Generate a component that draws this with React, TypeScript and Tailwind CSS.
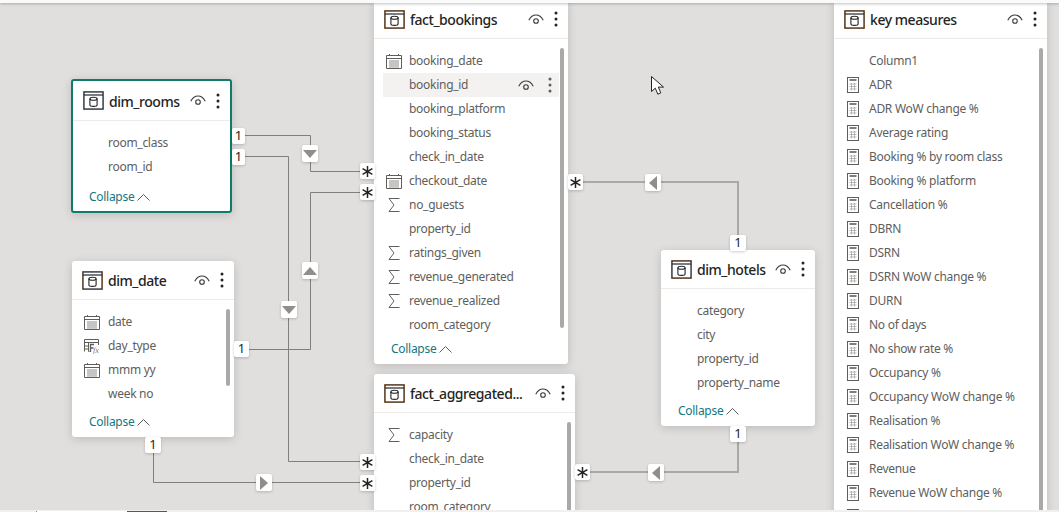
import React from "react";

type IconKind = "none" | "calendar" | "sigma" | "calc" | "fx";
type Field = { name: string; icon?: IconKind; active?: boolean };

function TableIcon() {
  return (
    <svg width="21" height="19" viewBox="0 0 21 19" fill="none" className="shrink-0">
      <rect x="0.5" y="0.5" width="20" height="18" stroke="#e8a05a" strokeWidth="1" />
      <rect x="1" y="1" width="19" height="17" stroke="#1f2733" strokeWidth="1.2" />
      <path d="M1 4h19" stroke="#1f2733" strokeWidth="1.2" />
      <ellipse cx="10.500" cy="7.800" rx="3.600" ry="1.500" stroke="#252423" strokeWidth="1.1" />
      <path d="M6.900 7.800v6.200c0 .9 1.600 1.400 3.600 1.400s3.600-.5 3.600-1.400V7.800" stroke="#252423" strokeWidth="1.1" />
    </svg>
  );
}

function Eye() {
  return (
    <svg width="16" height="11" viewBox="0 0 16 11" fill="none" className="shrink-0">
      <path d="M.8 6.200C2.600 2.800 5.200 1 8 1s5.400 1.800 7.200 5.200" stroke="#3b3a39" strokeWidth="1.1" />
      <circle cx="8" cy="7" r="2.300" stroke="#3b3a39" strokeWidth="1.1" />
    </svg>
  );
}

function Dots({ color = "#252423" }: { color?: string }) {
  return (
    <svg width="4" height="16" viewBox="0 0 4 16" className="shrink-0" fill={color}>
      <circle cx="2" cy="2" r="1.500" />
      <circle cx="2" cy="8" r="1.500" />
      <circle cx="2" cy="14" r="1.500" />
    </svg>
  );
}

function FieldIcon({ kind }: { kind: IconKind }) {
  if (kind === "calendar") {
    return (
      <svg width="16" height="16" viewBox="0 0 16 16" fill="none" stroke="#605e5c" strokeWidth="1">
        <path d="M.5 2.500h15v13H.5zM.5 5.500h15M3.500 1v2M12.500 1v2" />
        <path d="M3 8h10M3 10h10M3 12h10M3 14h10M4 7v7.500M6 7v7.500M8 7v7.500M10 7v7.500M12 7v7.500" stroke="#a6a4a2" strokeWidth=".8" />
      </svg>
    );
  }
  if (kind === "sigma") {
    return (
      <svg width="12" height="14" viewBox="0 0 12 14" fill="none" stroke="#605e5c" strokeWidth="1" className="ml-[2px]">
        <path d="M11.500.5H1l5 6.500-5 6.500h10.500" />
      </svg>
    );
  }
  if (kind === "calc") {
    return (
      <svg width="12" height="16" viewBox="0 0 12 16" fill="none" stroke="#605e5c" strokeWidth="1" className="ml-[1px]">
        <rect x=".5" y=".5" width="11" height="15" />
        <path d="M2.500 3h7" strokeWidth="1.600" />
        <path d="M2.500 7h7M2.500 9.500h7M2.500 12h7M4.500 6v7.500M7.500 6v7.500" stroke="#a6a4a2" strokeWidth=".8" />
      </svg>
    );
  }
  if (kind === "fx") {
    return (
      <svg width="16" height="16" viewBox="0 0 16 16" fill="none">
        <path d="M.5 13.500V1.500h14V7M.5 4.500h14M.5 8h4M.5 11h4M4.500 4.500v9h1" stroke="#605e5c" />
        <path d="M10 6.500H6.500v7.500M6.500 10h3" stroke="#605e5c" strokeWidth="1.300" />
        <text x="9" y="15" fontSize="8" fontStyle="italic" fontFamily="Liberation Serif, serif" fill="#7a7876">fx</text>
      </svg>
    );
  }
  return null;
}

function TableCard({
  title,
  fields,
  className,
  scroll,
  collapse,
  headerClass = "h-[39px]",
  iconCol = "w-[26px]",
}: {
  title: string;
  fields: Field[];
  className: string;
  scroll?: string;
  collapse?: string;
  headerClass?: string;
  iconCol?: string;
}) {
  return (
    <div className={`absolute bg-white rounded-[3px] shadow-[0_2px_10px_rgba(0,0,0,0.16)] ${className}`}>
      <div className={`flex items-center pl-[10px] pr-[10px] border-b border-[#ecebea] ${headerClass}`}>
        <TableIcon />
        <span className="ml-[5px] pt-px flex-1 whitespace-nowrap text-[14px] font-medium tracking-[-0.45px] text-[#252423]">{title}</span>
        <Eye />
        <span className="ml-[10px]"><Dots /></span>
      </div>
      <div className="pt-[10px] px-[9px]">
        {fields.map((f, i) => (
          <div key={f.name + i} className={`flex items-center h-6 ${f.active ? "bg-[#f3f2f1]" : ""}`}>
            <span className={`pl-[3px] shrink-0 flex items-center ${iconCol}`}>
              {f.icon ? <FieldIcon kind={f.icon} /> : null}
            </span>
            <span className="flex-1 whitespace-nowrap text-[12px] tracking-[-0.28px] text-[#605e5c]">{f.name}</span>
            {f.active ? (
              <span className="flex items-center gap-[14px] pr-[7px]">
                <Eye />
                <Dots color="#605e5c" />
              </span>
            ) : null}
          </div>
        ))}
      </div>
      {collapse ? (
        <div className={`flex items-center text-[12px] tracking-[-0.28px] text-[#13777f] ${collapse}`}>
          Collapse
          <svg width="13" height="7" viewBox="0 0 13 7" fill="none" stroke="#605e5c" className="ml-[3px]">
            <path d="M.5 6.500l6-6 6 6" />
          </svg>
        </div>
      ) : null}
      {scroll ? <div className={`absolute w-1 rounded-sm bg-[#a9a9a9] ${scroll}`} /> : null}
    </div>
  );
}

function Badge({ className, children }: { className: string; children: React.ReactNode }) {
  return (
    <div className={`absolute flex items-center justify-center bg-white rounded-[2px] shadow-[0_1px_3px_rgba(0,0,0,0.2)] ${className}`}>
      {children}
    </div>
  );
}

function One({ className }: { className: string }) {
  return <Badge className={`h-4 text-[13px] text-[#252423] ${className}`}>1</Badge>;
}

function Star({ className }: { className: string }) {
  return (
    <Badge className={`w-[15px] h-4 ${className}`}>
      <svg width="11" height="11" viewBox="0 0 11 11" stroke="#252423" strokeWidth="1.500">
        <path d="M5.500 0v11M.6 2.600l9.800 5.800M.6 8.400l9.800-5.800" />
      </svg>
    </Badge>
  );
}

function Arrow({ dir, className }: { dir: "down" | "up" | "left" | "right"; className: string }) {
  const d = {
    down: "M0 3h14L7 11z",
    up: "M0 11h14L7 3z",
    left: "M11 0v14L3 7z",
    right: "M3 0v14l8-7z",
  }[dir];
  return (
    <Badge className={`w-4 h-[17px] ${className}`}>
      <svg width="14" height="14" viewBox="0 0 14 14" fill="#8f8e8d">
        <path d={d} />
      </svg>
    </Badge>
  );
}

const rooms: Field[] = [{ name: "room_class" }, { name: "room_id" }];
const dates: Field[] = [
  { name: "date", icon: "calendar" },
  { name: "day_type", icon: "fx" },
  { name: "mmm yy", icon: "calendar" },
  { name: "week no" },
];
const bookings: Field[] = [
  { name: "booking_date", icon: "calendar" },
  { name: "booking_id", active: true },
  { name: "booking_platform" },
  { name: "booking_status" },
  { name: "check_in_date" },
  { name: "checkout_date", icon: "calendar" },
  { name: "no_guests", icon: "sigma" },
  { name: "property_id" },
  { name: "ratings_given", icon: "sigma" },
  { name: "revenue_generated", icon: "sigma" },
  { name: "revenue_realized", icon: "sigma" },
  { name: "room_category" },
];
const aggregated: Field[] = [
  { name: "capacity", icon: "sigma" },
  { name: "check_in_date" },
  { name: "property_id" },
  { name: "room_category" },
];
const hotels: Field[] = [
  { name: "category" },
  { name: "city" },
  { name: "property_id" },
  { name: "property_name" },
];
const measures: Field[] = [
  { name: "Column1" },
  ...[
    "ADR",
    "ADR WoW change %",
    "Average rating",
    "Booking % by room class",
    "Booking % platform",
    "Cancellation %",
    "DBRN",
    "DSRN",
    "DSRN WoW change %",
    "DURN",
    "No of days",
    "No show rate %",
    "Occupancy %",
    "Occupancy WoW change %",
    "Realisation %",
    "Realisation WoW change %",
    "Revenue",
    "Revenue WoW change %",
    "",
  ].map((name): Field => ({ name, icon: "calc" })),
];

export default function App() {
  return (
    <div className="flex flex-col w-[1059px] h-[512px] overflow-hidden bg-[#f0f0f0] font-['Noto_Sans',sans-serif]">
      <div className="relative z-10 h-[3px] shrink-0 bg-[#fafafa] shadow-[0_1px_3px_rgba(0,0,0,0.25)]" />

      <div className="relative flex-1 overflow-hidden bg-[#e0dfdd]">
        {/* relationship lines */}
        <svg width="1059" height="507" viewBox="0 3 1059 507" fill="none" className="absolute inset-0">
          <g stroke="#7f7f7f" strokeWidth="1">
            <path d="M245 135.500H310.500V171.500H361" />
            <path d="M245 156.500H288.500V461.500H361" />
            <path d="M361 192.500H310.500V349.500H247" />
            <path d="M361 482.500H153.500V452" />
          </g>
          <g stroke="#a9a9a9" strokeWidth="2">
            <path d="M583 182H738V236" />
            <path d="M590 472H738V441" />
          </g>
        </svg>

        <TableCard
          title="dim_rooms"
          fields={rooms}
          className="left-[71px] top-[76px] w-[161px] h-[134px] border-2 border-[#0f7b68]"
          headerClass="h-[40px]"
          collapse="h-[36px] pl-4"
        />
        <TableCard
          title="dim_date"
          fields={dates}
          className="left-[72px] top-[258px] w-[162px] h-[176px]"
          scroll="right-[4px] top-[48px] h-[77px]"
          iconCol="w-[27px]"
          collapse="h-8 pl-[17px]"
        />
        <TableCard
          title="fact_bookings"
          fields={bookings}
          className="left-[374px] top-[-3px] w-[194px] h-[364px]"
          scroll="right-[4px] top-[48px] h-[280px]"
          collapse="h-6 pl-[17px]"
        />
        <TableCard
          title="fact_aggregated..."
          fields={aggregated}
          className="left-[374px] top-[371px] w-[201px] h-[170px]"
          scroll="right-[4px] top-[48px] h-[110px]"
        />
        <TableCard
          title="dim_hotels"
          fields={hotels}
          className="left-[661px] top-[247px] w-[154px] h-[176px]"
          iconCol="w-[27px]"
          collapse="h-8 pl-[17px]"
        />
        <TableCard
          title="key measures"
          fields={measures}
          className="left-[834px] top-[-3px] w-[213px] h-[540px]"
          scroll="right-[4px] top-[48px] h-[480px]"
        />

        <One className="left-[232px] top-[125px] w-[13px]" />
        <One className="left-[232px] top-[146px] w-[13px]" />
        <One className="left-[234px] top-[338px] w-[15px]" />
        <One className="left-[145px] top-[434px] w-4" />
        <One className="left-[730px] top-[232px] w-4" />
        <One className="left-[730px] top-[423px] w-4" />

        <Star className="left-[360px] top-[160px]" />
        <Star className="left-[360px] top-[181px]" />
        <Star className="left-[360px] top-[451px]" />
        <Star className="left-[360px] top-[472px]" />
        <Star className="left-[568px] top-[171px]" />
        <Star className="left-[575px] top-[461px]" />

        <Arrow dir="down" className="left-[302px] top-[142px]" />
        <Arrow dir="up" className="left-[302px] top-[259px]" />
        <Arrow dir="down" className="left-[281px] top-[298px]" />
        <Arrow dir="right" className="left-[256px] top-[471px]" />
        <Arrow dir="left" className="left-[645px] top-[171px]" />
        <Arrow dir="left" className="left-[648px] top-[461px]" />

        {/* mouse pointer */}
        <svg width="14" height="20" viewBox="0 0 14 20" className="absolute left-[651px] top-[73px]">
          <path d="M.5.5v15l3.800-3.300 2.500 6 3-1.300-2.500-5.800h5.200z" fill="#fff" stroke="#222" strokeWidth="1" />
        </svg>
      </div>

      <div className="h-[2px] shrink-0 pt-px bg-[#f0f0f0]">
        <div className="flex h-px">
          <div className="w-[37px] border-r border-[#888]" />
          <div className="w-[90px] bg-white" />
          <div className="w-10 bg-[#117865]" />
        </div>
      </div>
    </div>
  );
}
